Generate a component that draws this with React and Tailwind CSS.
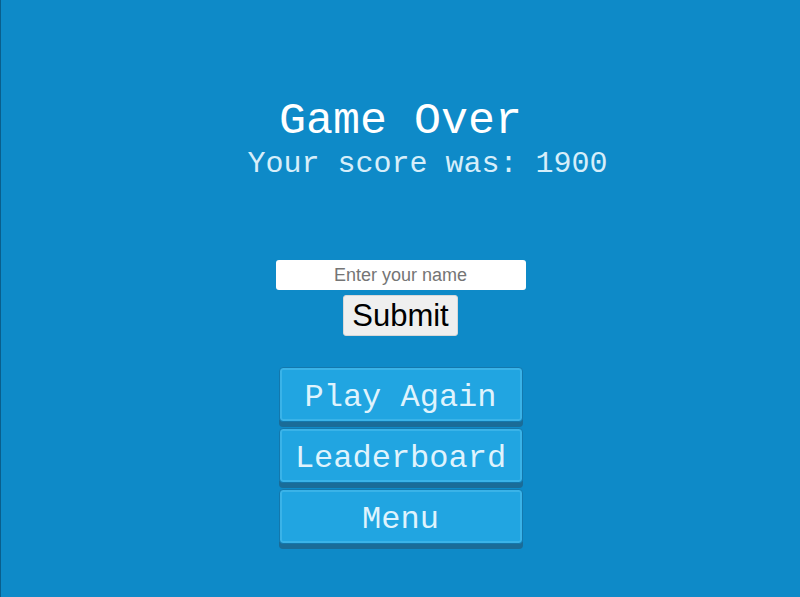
import { useState } from 'react';

const mono = { fontFamily: '"Liberation Mono", "Courier New", monospace' };

function MenuButton({ children }) {
  return (
    <button
      style={mono}
      className="w-[244px] h-[55px] rounded-[4px] border border-[#1378ad] bg-[#21a5e1] text-[32px] leading-none text-[#dff3fd] shadow-[inset_0_0_0_2px_#3ab3e8,0_5px_0_#1a6c98] pt-[6px]"
    >
      {children}
    </button>
  );
}

export default function App() {
  const [name, setName] = useState('');

  return (
    <div className="h-[597px] w-full bg-[#0e8ac8] border-l border-[#0a5f8c] flex flex-col items-center">
      <h1 style={mono} className="mt-[99px] text-[45px] leading-[45px] text-white">
        Game Over
      </h1>
      <p style={mono} className="mt-[2px] ml-[54px] text-[30px] leading-[36px] text-[#d6eefa]">
        Your score was: 1900
      </p>

      <div className="mt-[78px] flex flex-col items-center" style={{ fontFamily: '"Liberation Sans", Arial, sans-serif' }}>
        <input
          value={name}
          onChange={e => setName(e.target.value)}
          placeholder="Enter your name"
          className="w-[250px] h-[30px] rounded-[3px] bg-white text-center text-[18px] text-black placeholder:text-[#757575] outline-none"
        />
        <button className="mt-[5px] h-[41px] px-[8px] rounded-[3px] bg-[#efefef] text-[31px] leading-none text-black border border-[#d8d8d8]">
          Submit
        </button>
      </div>

      <div className="mt-[31px] flex flex-col items-center gap-[6px]">
        <MenuButton>Play Again</MenuButton>
        <MenuButton>Leaderboard</MenuButton>
        <MenuButton>Menu</MenuButton>
      </div>
    </div>
  );
}
